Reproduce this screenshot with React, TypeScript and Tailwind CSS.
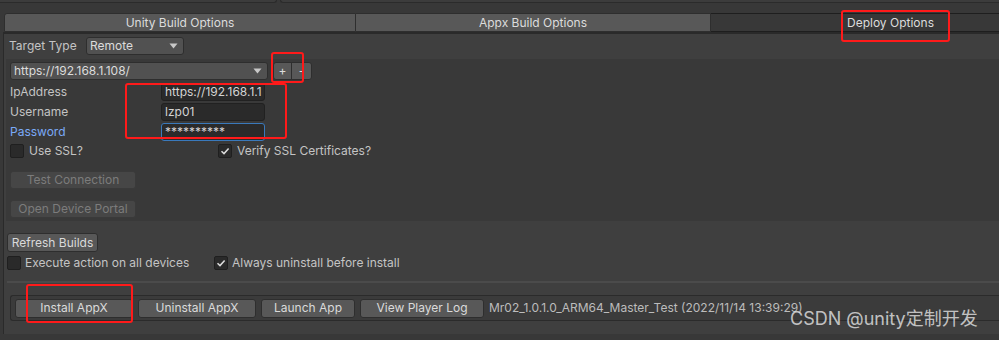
import React from 'react';

function Check({ checked }: { checked?: boolean }) {
    return (
        <div className="w-[14px] h-[14px] rounded-[2px] bg-[#2a2a2a] border border-[#1f1f1f] flex items-center justify-center">
            {checked && (
                <svg width="10" height="10" viewBox="0 0 10 10">
                    <path d="M1.5 5.2 L4 7.6 L8.6 2.4" fill="none" stroke="#dcdcdc" strokeWidth="1.5" />
                </svg>
            )}
        </div>
    );
}

function Arrow() {
    return (
        <svg width="9" height="6" viewBox="0 0 9 6">
            <path d="M0.5 0.5 L8.5 0.5 L4.5 5.5 Z" fill="#c8c8c8" />
        </svg>
    );
}

function Field({ value, focused }: { value: string; focused?: boolean }) {
    return (
        <div
            className={`w-[104px] h-[18px] rounded-[3px] bg-[#2a2a2a] border px-[3px] leading-[16px] overflow-hidden whitespace-nowrap text-[#d4d4d4] ${
                focused ? "border-[#3a79bb]" : "border-[#212121]"
            }`}
        >
            {value}
        </div>
    );
}

function Btn({ label, className = "" }: { label: string; className?: string }) {
    return (
        <div className={`h-[19px] rounded-[3px] bg-[#585858] border border-[#2e2e2e] text-[#dadada] flex items-center justify-center ${className}`}>
            {label}
        </div>
    );
}

export default function App() {
    return (
        <div
            className="relative w-[999px] h-[340px] overflow-hidden bg-[#383838] text-[12px] text-[#c4c4c4]"
            style={{ fontFamily: 'Inter, "Noto Sans CJK SC", sans-serif' }}
        >
            {/* top strip */}
            <div className="flex h-[3px] gap-[3px]">
                <div className="w-[277px] bg-[#3c3c3c] border-b border-r border-[#2b2b2b] rounded-br-[3px]" />
                <div className="flex-1 bg-[#3c3c3c] border-b border-l border-[#2b2b2b] rounded-bl-[3px]" />
            </div>
            <div className="h-[10px]" />

            {/* tabs */}
            <div className="flex h-[19px] pl-[4px]">
                <div className="w-[352px] bg-[#585858] border border-[#2e2e2e] rounded-tl-[3px] flex items-center justify-center text-[#dcdcdc]">
                    Unity Build Options
                </div>
                <div className="w-[355px] bg-[#585858] border-y border-r border-[#2e2e2e] flex items-center justify-center text-[#dcdcdc]">
                    Appx Build Options
                </div>
                <div className="flex-1 bg-[#383838] border-y border-[#1e1e1e] flex items-center pl-[136px] text-[#dcdcdc]">
                    Deploy Options
                </div>
            </div>
            <div className="h-[2px] bg-[#2a2a2a] ml-[3px]" />

            {/* body */}
            <div className="ml-[3px] border-l border-[#2a2a2a] bg-[#3f3f3f] h-[300px] pt-[3px]">
                <div className="flex items-center h-[18px] pl-[5px]">
                    <span className="w-[77px]">Target Type</span>
                    <div className="w-[98px] h-[18px] rounded-[3px] bg-[#515151] border border-[#2e2e2e] flex items-center justify-between pl-[3px] pr-[5px] text-[#dcdcdc]">
                        <span>Remote</span>
                        <Arrow />
                    </div>
                </div>

                {/* remote section */}
                <div className="mt-[4px] ml-[2px] bg-[#393939] h-[162px] pt-[3px] pl-[4px]">
                    <div className="flex items-center h-[18px]">
                        <div className="w-[258px] h-[18px] rounded-[3px] bg-[#515151] border border-[#2e2e2e] flex items-center justify-between pl-[3px] pr-[5px] text-[#dcdcdc]">
                            <span>https://192.168.1.108/</span>
                            <Arrow />
                        </div>
                        <div className="ml-[5px] flex h-[18px] rounded-[3px] bg-[#585858] border border-[#2e2e2e] text-[#dcdcdc]">
                            <div className="w-[18px] flex items-center justify-center border-r border-[#2e2e2e]">+</div>
                            <div className="w-[19px] flex items-center justify-center">-</div>
                        </div>
                    </div>

                    <div className="mt-[3px] flex flex-col gap-[2px]">
                        <div className="flex items-center h-[18px]">
                            <span className="w-[151px]">IpAddress</span>
                            <Field value="https://192.168.1.1" />
                        </div>
                        <div className="flex items-center h-[18px]">
                            <span className="w-[151px]">Username</span>
                            <Field value="lzp01" />
                        </div>
                        <div className="flex items-center h-[18px]">
                            <span className="w-[151px] text-[#7baaf7]">Password</span>
                            <Field value="**********" focused />
                        </div>
                    </div>

                    <div className="mt-[2px] flex items-center h-[16px]">
                        <div className="flex items-center gap-[5px] w-[208px]">
                            <Check />
                            <span>Use SSL?</span>
                        </div>
                        <div className="flex items-center gap-[5px]">
                            <Check checked />
                            <span>Verify SSL Certificates?</span>
                        </div>
                    </div>

                    <div className="mt-[12px] w-[126px] h-[18px] rounded-[3px] bg-[#464646] border border-[#3a3a3a] text-[#7c7c7c] flex items-center justify-center">
                        Test Connection
                    </div>
                    <div className="mt-[11px] w-[126px] h-[18px] rounded-[3px] bg-[#464646] border border-[#3a3a3a] text-[#7c7c7c] flex items-center justify-center">
                        Open Device Portal
                    </div>
                </div>

                <div className="pl-[3px] mt-[12px]">
                    <Btn label="Refresh Builds" className="w-[91px] h-[18px]" />
                    <div className="mt-[3px] flex items-center h-[16px]">
                        <div className="flex items-center gap-[4px] w-[207px]">
                            <Check />
                            <span>Execute action on all devices</span>
                        </div>
                        <div className="flex items-center gap-[4px]">
                            <Check checked />
                            <span>Always uninstall before install</span>
                        </div>
                    </div>
                </div>

                <div className="mt-[10px] ml-[3px] h-[2px] bg-[#4b4b4b]" />

                {/* action bar */}
                <div className="mt-[12px] ml-[6px] h-[26px] rounded-l-[3px] border border-r-0 border-[#2b2b2b] bg-[#3b3b3b] flex items-center gap-[5px] pl-[4px]">
                    <Btn label="Install AppX" className="w-[118px]" />
                    <Btn label="Uninstall AppX" className="w-[118px]" />
                    <Btn label="Launch App" className="w-[94px]" />
                    <Btn label="View Player Log" className="w-[124px]" />
                    <span className="text-[#bcbcbc]">Mr02_1.0.1.0_ARM64_Master_Test (2022/11/14 13:39:29)</span>
                </div>
            </div>

            {/* annotations */}
            <div className="absolute left-[841px] top-[10px] w-[109px] h-[32px] border-2 border-[#ff1a1a] rounded-[3px]" />
            <div className="absolute left-[271px] top-[52px] w-[33px] h-[31px] border-2 border-[#ff1a1a] rounded-[3px]" />
            <div className="absolute left-[125px] top-[83px] w-[162px] h-[56px] border-2 border-[#ff1a1a] rounded-[3px]" />
            <div className="absolute left-[26px] top-[284px] w-[107px] h-[39px] border-2 border-[#ff1a1a] rounded-[3px]" />

            {/* watermark */}
            <div className="absolute left-[790px] top-[307px] text-[18px] leading-[24px] text-[#e6e6e6]/80">CSDN @unity定制开发</div>
        </div>
    );
}
